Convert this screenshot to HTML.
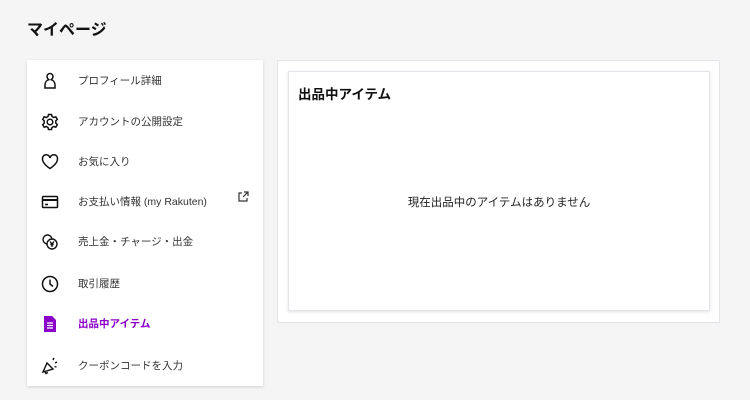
<!DOCTYPE html>
<html><head><meta charset="utf-8"><style>
*{margin:0;padding:0;box-sizing:border-box}
body{width:750px;height:400px;background:#f5f5f5;font-family:"Liberation Sans","Noto Sans CJK JP",sans-serif;color:#222;position:relative;overflow:hidden}
h1{position:absolute;left:27px;top:16px;font-size:16px;font-weight:bold;color:#111}
.side{position:absolute;left:27px;top:60px;width:236px;height:326px;background:#fff;box-shadow:0 1px 3px rgba(0,0,0,.15)}
.it{position:absolute;left:0;width:236px;height:24px;font-size:10.5px;color:#333;line-height:24px}
.it svg{position:absolute;left:13px;top:2px;width:20px;height:20px}
.it span{position:absolute;left:51px}
.act{color:#8a00c9;font-weight:bold}
.outer{position:absolute;left:277px;top:60px;width:443px;height:263px;background:#fff;border:1px solid #e4e4ea}
.inner{position:absolute;left:10px;top:10px;width:422px;height:240px;background:#fff;border:1px solid #e4e4ea;box-shadow:0 1px 3px rgba(0,0,0,.12)}
.inner h2{position:absolute;left:9px;top:11px;font-size:13.5px;font-weight:bold;color:#111}
.inner p{position:absolute;left:0;right:0;top:122px;text-align:center;font-size:11.5px;color:#222}
</style></head><body>
<h1>マイページ</h1>
<div class="side">
<div class="it" style="top:9px"><svg viewBox="0 0 20 20" fill="none" stroke="#111" stroke-width="1.5"><path d="M10 2.5a3 3 0 0 1 3 3c0 1.5-1 2.5-1.8 3.2 2 .6 3.8 2.5 3.8 5v3.3H5V13.7c0-2.5 1.8-4.4 3.8-5C8 8 7 7 7 5.5a3 3 0 0 1 3-3z"/></svg><span>プロフィール詳細</span></div>
<div class="it" style="top:50px"><svg viewBox="0 0 20 20" fill="none" stroke="#111" stroke-width="1.5"><circle cx="10" cy="10" r="2.8"/><path d="M8.5 2.5h3l.5 2 1.8 1 2-.7 1.5 2.6-1.5 1.4v2.4l1.5 1.4-1.5 2.6-2-.7-1.8 1-.5 2h-3l-.5-2-1.8-1-2 .7-1.5-2.6 1.5-1.4V8.8L2.7 7.4l1.5-2.6 2 .7 1.8-1z"/></svg><span>アカウントの公開設定</span></div>
<div class="it" style="top:90px"><svg viewBox="0 0 20 20" fill="none" stroke="#111" stroke-width="1.5"><path d="M10 16.5S2.5 12 2.5 7a3.7 3.7 0 0 1 7.5-1 3.7 3.7 0 0 1 7.5 1c0 5-7.5 9.5-7.5 9.5z"/></svg><span>お気に入り</span></div>
<div class="it" style="top:130px"><svg viewBox="0 0 20 20" fill="none" stroke="#111" stroke-width="1.5"><rect x="2.5" y="4.5" width="15" height="11" rx="1"/><path d="M2.5 8h15" stroke-width="2"/><path d="M5 12.5h3"/></svg><span>お支払い情報 (my Rakuten)</span><svg style="left:209px;top:0;width:14px;height:14px" viewBox="0 0 14 14" fill="none" stroke="#333" stroke-width="1.2"><path d="M6 3H3v8h8V8M8 2h4v4M12 2L7 7"/></svg></div>
<div class="it" style="top:170px"><svg viewBox="0 0 20 20" fill="none" stroke="#111" stroke-width="1.4"><circle cx="7.5" cy="7.5" r="4.5"/><circle cx="12" cy="12" r="5" fill="#fff"/><path d="M10 9.5l2 2.5 2-2.5M12 12v3M10.3 12.5h3.4"/></svg><span>売上金・チャージ・出金</span></div>
<div class="it" style="top:212px"><svg viewBox="0 0 20 20" fill="none" stroke="#111" stroke-width="1.5"><circle cx="10" cy="10" r="7.5"/><path d="M10 5.5V10l3 2.5"/></svg><span>取引履歴</span></div>
<div class="it act" style="top:252px"><svg viewBox="0 0 20 20"><path d="M4 2h8l4 4v12H4z" fill="#8a00c9"/><path d="M7 9h6M7 11.5h6M7 14h6" stroke="#fff" stroke-width="1.2"/></svg><span>出品中アイテム</span></div>
<div class="it" style="top:294px"><svg viewBox="0 0 20 20" fill="none" stroke="#111" stroke-width="1.4"><path d="M3 16l4-9 6 6z"/><path d="M5 15.5l1 2 2-1M13 4l1-2M15 7l2-1M14.5 10.5l2 .5"/></svg><span>クーポンコードを入力</span></div>
</div>
<div class="outer"><div class="inner"><h2>出品中アイテム</h2><p>現在出品中のアイテムはありません</p></div></div>
</body></html>
